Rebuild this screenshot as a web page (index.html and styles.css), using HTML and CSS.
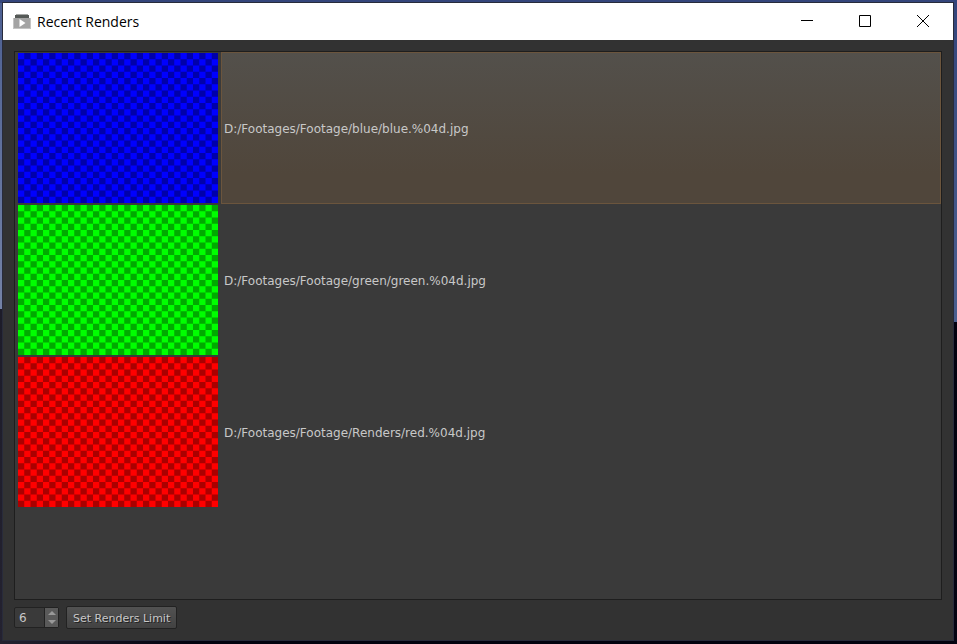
FILE: index.html
```html
<!DOCTYPE html>
<html lang="en">
<head>
<meta charset="utf-8">
<title>Recent Renders</title>
<link rel="stylesheet" href="styles.css">
</head>
<body>
<svg class="defs" width="0" height="0" aria-hidden="true">
  <symbol id="checker" viewBox="0 0 32 24">
    <path d="M1 .5H32M0 1.5H32M1 2.5H32M0 3.5H32M1 4.5H32M0 5.5H32M1 6.5H32M0 7.5H32M1 8.5H32M0 9.5H32M1 10.5H32M0 11.5H32M1 12.5H32M0 13.5H32M1 14.5H32M0 15.5H32M1 16.5H32M0 17.5H32M1 18.5H32M0 19.5H32M1 20.5H32M0 21.5H32M1 22.5H32M0 23.5H32" stroke="currentColor" stroke-dasharray="1 1"/>
  </symbol>
</svg>
<main class="window">
  <header class="titlebar">
    <svg class="app-icon" viewBox="0 0 18 18" aria-hidden="true">
      <path d="M2 3h14v3H2z" fill="#555957"/>
      <path d="M3 2h12v1H3z" fill="#a5a7a6"/>
      <path d="M0 6h18v11H0z" fill="#a4a4a4"/>
      <path d="M0 6h1v11H0zM17 6h1v11h-1zM0 16h18v1H0z" fill="#c4c4c4"/>
      <path d="M6.500 7v8l6-4z" fill="#fff"/>
    </svg>
    <h1 class="title">Recent Renders</h1>
    <div class="controls">
      <button class="control" type="button" aria-label="Minimize"><svg viewBox="0 0 12 12"><path d="M0 5.5h12"/></svg></button>
      <button class="control" type="button" aria-label="Maximize"><svg viewBox="0 0 12 12"><path d="M.5.5h11v11H.5z"/></svg></button>
      <button class="control" type="button" aria-label="Close"><svg viewBox="0 0 12 12"><path d="M0 0l12 12M12 0L0 12"/></svg></button>
    </div>
  </header>
  <section class="content">
    <ul class="renders">
      <li class="render selected"><svg class="thumb blue" aria-hidden="true"><use href="#checker"/></svg><span class="path">D:/Footages/Footage/blue/blue.%04d.jpg</span></li>
      <li class="render"><svg class="thumb green" aria-hidden="true"><use href="#checker"/></svg><span class="path">D:/Footages/Footage/green/green.%04d.jpg</span></li>
      <li class="render"><svg class="thumb red" aria-hidden="true"><use href="#checker"/></svg><span class="path">D:/Footages/Footage/Renders/red.%04d.jpg</span></li>
    </ul>
    <form class="toolbar">
      <div class="spinbox">
        <input class="limit" type="text" inputmode="numeric" value="6" aria-label="Renders limit">
        <div class="steps">
          <button class="step" type="button" aria-label="Increase"><svg viewBox="0 0 8 4"><path d="M0 4l4-4 4 4z"/></svg></button>
          <button class="step" type="button" aria-label="Decrease"><svg viewBox="0 0 8 4"><path d="M0 0l4 4 4-4z"/></svg></button>
        </div>
      </div>
      <button class="set-limit" type="button">Set Renders Limit</button>
    </form>
  </section>
</main>
</body>
</html>
```
FILE: styles.css
```css
* { box-sizing: border-box; }

body {
  margin: 0;
  height: 100vh;
  padding: 2px 3px 3px 2px;
  background:
    linear-gradient(#34457b, #34457b) top / 100% 3px no-repeat,
    linear-gradient(#4c5f92, #7482a6 48%, #1d1c29 48%, #242230) left / 3px 100% no-repeat,
    linear-gradient(#34457b, #4a5f8f 50%, #02020f 50%, #040412) right / 3px 100% no-repeat,
    linear-gradient(90deg, #242230, #02020f 20%);
  font-family: "DejaVu Sans", Verdana, sans-serif;
  font-size: 11px;
  color: #c8c8c8;
}

.defs { position: absolute; }

.window {
  display: flex;
  flex-direction: column;
  height: 100%;
  border: 1px solid #282b3b;
  background: #323232;
}

.titlebar {
  display: flex;
  align-items: center;
  flex: none;
  height: 37px;
  padding: 0 1px 1px 10px;
  background: #fff;
  color: #000;
}

.app-icon { width: 18px; height: 18px; }

.title {
  margin: 0 0 0 6px;
  font: 14px "Open Sans", "Noto Sans", sans-serif;
}

.controls { display: flex; height: 100%; margin-left: auto; }

.control {
  display: flex;
  align-items: center;
  justify-content: center;
  width: 58px;
  padding: 0;
  border: 0;
  background: none;
}

.control svg { width: 12px; height: 12px; fill: none; stroke: #000; }

.content {
  display: flex;
  flex-direction: column;
  flex: 1;
  gap: 6px;
  padding: 11px;
}

.renders {
  flex: 1;
  margin: 0;
  padding: 0;
  border: 1px solid #1e1e1e;
  background: #3a3a3a;
  font-size: 12px;
  list-style: none;
}

.render { display: flex; height: 152px; padding-left: 3px; }

.thumb {
  flex: none;
  width: 200px;
  height: 150px;
  margin: 1px 3px 0 0;
}

.blue { background: #0000ff; color: #0000aa; }
.green { background: #00ff00; color: #00aa00; }
.red { background: #ff0000; color: #aa0000; }

.path {
  display: flex;
  align-items: center;
  flex: 1;
  padding: 1px 0 0 2px;
  border: 1px solid transparent;
}

.selected .path {
  border-color: #6b553d;
  background: linear-gradient(#53504b, #50463b 80%);
}

.toolbar { display: flex; align-items: center; gap: 7px; height: 23px; }

.spinbox {
  display: flex;
  width: 45px;
  height: 21px;
  border: 1px solid #222;
  border-radius: 2px;
  background: #3a3a3a;
}

.limit {
  flex: 1;
  min-width: 0;
  padding: 1px 0 0 4px;
  border: 0;
  background: none;
  font-family: inherit;
  font-size: 12px;
  color: inherit;
}

.steps {
  display: flex;
  flex-direction: column;
  width: 14px;
  border-left: 1px solid #222;
  background: #5a5a5a;
}

.step {
  display: flex;
  align-items: center;
  justify-content: center;
  flex: 1;
  padding: 0;
  border: 0;
  background: none;
}

.step svg { width: 8px; height: 4px; fill: #999; }

.set-limit {
  height: 23px;
  padding: 1px 6px 0;
  border: 1px solid #222;
  border-radius: 2px;
  background: linear-gradient(#525252, #424242);
  font: inherit;
  color: inherit;
  text-shadow: 1px 1px #222;
}
```
